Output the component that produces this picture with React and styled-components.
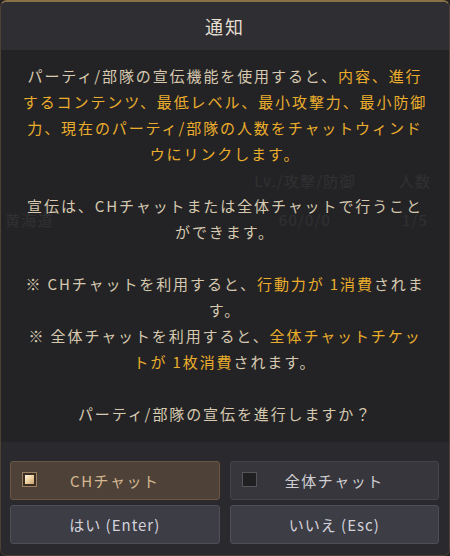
import React from "react";
import styled, { createGlobalStyle } from "styled-components";

const GlobalStyle = createGlobalStyle`
  html, body {
    margin: 0;
    padding: 0;
    background: #1c1c1f;
  }
  * {
    box-sizing: border-box;
  }
`;

const FONT = `"Noto Sans CJK JP", "Noto Sans", sans-serif`;

// page behind the dialog
const Screen = styled.div`
  position: relative;
  width: 450px;
  height: 556px;
  overflow: hidden;
  background: #232326;
  font-family: ${FONT};
`;

const GhostTable = styled.div`
  display: grid;
  grid-template-columns: 230px 150px 70px;
  grid-auto-rows: 39px;
  padding-top: 161px;
  color: #a4a3a8;
  font-size: 15px;
  letter-spacing: 1.2px;
`;

const GhostCell = styled.div`
  display: flex;
  align-items: center;
  justify-content: ${(p) => (p.$left ? "flex-start" : "center")};
  padding-left: ${(p) => (p.$left ? "5px" : "0")};
`;

// dialog
const Dialog = styled.div`
  position: absolute;
  inset: 0;
  display: flex;
  flex-direction: column;
  border: 1px solid #4d4133;
  border-top: 2px solid #8a7247;
  border-radius: 7px;
  overflow: hidden;
`;

const Header = styled.div`
  height: 48px;
  display: flex;
  align-items: center;
  justify-content: center;
  background: #2f2e32;
  color: #e6dfd2;
  font-size: 18px;
  letter-spacing: 2px;
`;

const Body = styled.div`
  height: 392px;
  padding: 13px 10px 15px;
  background: rgba(35, 35, 38, 0.9);
  color: #d6c9b0;
  font-size: 15px;
  line-height: 26px;
  letter-spacing: 1.9px;
  text-align: center;
  white-space: nowrap;
`;

const Hi = styled.span`
  color: #eaad2c;
`;

const Footer = styled.div`
  flex: 1;
  display: grid;
  grid-template-columns: 1fr 1fr;
  grid-template-rows: 39px 39px;
  column-gap: 10px;
  row-gap: 5px;
  padding: 19px 10px 10px 9px;
  background: #2a292e;
`;

const ToggleButton = styled.div`
  position: relative;
  display: flex;
  align-items: center;
  justify-content: center;
  border-radius: 3px;
  border: 1px solid ${(p) => (p.$on ? "#6a5645" : "#45444b")};
  background: ${(p) => (p.$on ? "#4e4238" : "#37363c")};
  color: ${(p) => (p.$on ? "#d5b892" : "#d0cfd2")};
  font-size: 15px;
  letter-spacing: 1.5px;
`;

const Check = styled.span`
  position: absolute;
  left: 11px;
  top: 10px;
  width: 15px;
  height: 15px;
  border: 1px solid ${(p) => (p.$on ? "#9a7e62" : "#55545a")};
  background: ${(p) => (p.$on ? "#3a2e24" : "#202022")};
  padding: 2px;

  &::after {
    content: "";
    display: ${(p) => (p.$on ? "block" : "none")};
    width: 100%;
    height: 100%;
    background: linear-gradient(135deg, #fff6df 0%, #f0d6a6 45%, #c9a06a 100%);
  }
`;

const ActionButton = styled.div`
  display: flex;
  align-items: center;
  justify-content: center;
  border-radius: 3px;
  border: 1px solid #4f4e58;
  background: #3d3d46;
  color: #d3d2da;
  font-size: 15px;
  letter-spacing: 1px;
`;

export default function App() {
  return (
    <>
      <GlobalStyle />
      <Screen>
        <GhostTable>
          <GhostCell $left />
          <GhostCell>Lv./攻撃/防御</GhostCell>
          <GhostCell>人数</GhostCell>
          <GhostCell $left>黄海道</GhostCell>
          <GhostCell>60/0/0</GhostCell>
          <GhostCell>1/5</GhostCell>
        </GhostTable>

        <Dialog>
          <Header>通知</Header>
          <Body>
            パーティ/部隊の宣伝機能を使用すると、<Hi>内容、進行</Hi>
            <br />
            <Hi>するコンテンツ、最低レベル、最小攻撃力、最小防御</Hi>
            <br />
            <Hi>力、現在のパーティ/部隊の人数をチャットウィンド</Hi>
            <br />
            <Hi>ウにリンクします。</Hi>
            <br />
            <br />
            宣伝は、CHチャットまたは全体チャットで行うこと
            <br />
            ができます。
            <br />
            <br />
            ※ CHチャットを利用すると、<Hi>行動力が 1消費</Hi>されま
            <br />
            す。
            <br />
            ※ 全体チャットを利用すると、<Hi>全体チャットチケッ</Hi>
            <br />
            <Hi>トが 1枚消費</Hi>されます。
            <br />
            <br />
            パーティ/部隊の宣伝を進行しますか？
          </Body>
          <Footer>
            <ToggleButton $on>
              <Check $on />
              CHチャット
            </ToggleButton>
            <ToggleButton>
              <Check />
              全体チャット
            </ToggleButton>
            <ActionButton>はい (Enter)</ActionButton>
            <ActionButton>いいえ (Esc)</ActionButton>
          </Footer>
        </Dialog>
      </Screen>
    </>
  );
}
